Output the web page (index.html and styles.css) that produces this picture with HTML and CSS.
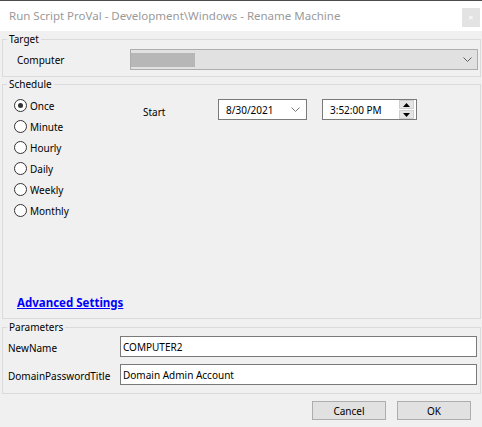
FILE: index.html
```html
<!DOCTYPE html>
<html>
<head>
<meta charset="utf-8">
<link rel="stylesheet" href="styles.css">
</head>
<body>
<div class="window">
  <div class="titlebar">
    <span class="title">Run Script ProVal - Development\Windows - Rename Machine</span>
    <span class="close">&#x2715;</span>
  </div>
  <div class="content">
    <fieldset class="group target">
      <legend>Target</legend>
      <div class="target-inner">
        <span class="lbl-computer">Computer</span>
        <div class="combo">
          <span class="blur"></span>
          <svg class="chev" width="9" height="5" viewBox="0 0 9 5"><path d="M0.5 0.5 L4.5 4.5 L8.5 0.5" fill="none" stroke="#606060" stroke-width="1"/></svg>
        </div>
      </div>
    </fieldset>
    <fieldset class="group schedule">
      <legend>Schedule</legend>
      <div class="sched-inner">
        <div class="sched-top">
          <div class="radios">
            <div class="radio"><span class="circle checked"></span>Once</div>
            <div class="radio"><span class="circle"></span>Minute</div>
            <div class="radio"><span class="circle"></span>Hourly</div>
            <div class="radio"><span class="circle"></span>Daily</div>
            <div class="radio"><span class="circle"></span>Weekly</div>
            <div class="radio"><span class="circle"></span>Monthly</div>
          </div>
          <div class="start">
            <span class="start-lbl">Start</span>
            <div class="date">
              <span>8/30/2021</span>
              <svg class="dchev" width="9" height="5" viewBox="0 0 9 5"><path d="M0.5 0.5 L4.5 4.5 L8.5 0.5" fill="none" stroke="#777" stroke-width="1"/></svg>
            </div>
            <div class="time">
              <span>3:52:00 PM</span>
              <div class="spin">
                <div class="spin-btn"><svg width="7" height="4" viewBox="0 0 7 4"><path d="M0 4 L3.5 0 L7 4 Z" fill="#000"/></svg></div>
                <div class="spin-btn"><svg width="7" height="4" viewBox="0 0 7 4"><path d="M0 0 L3.5 4 L7 0 Z" fill="#000"/></svg></div>
              </div>
            </div>
          </div>
        </div>
        <a class="adv" href="#">Advanced Settings</a>
      </div>
    </fieldset>
    <fieldset class="group params">
      <legend>Parameters</legend>
      <div class="params-inner">
        <div class="prow"><span class="plbl">NewName</span><div class="input">COMPUTER2</div></div>
        <div class="prow"><span class="plbl">DomainPasswordTitle</span><div class="input">Domain Admin Account</div></div>
      </div>
    </fieldset>
    <div class="buttons">
      <div class="btn">Cancel</div>
      <div class="btn">OK</div>
    </div>
  </div>
</div>
</body>
</html>
```
FILE: styles.css
```css
html, body {
  margin: 0;
  padding: 0;
  background: #f0f0f0;
}
body {
  font-family: "Noto Sans", "Liberation Sans", sans-serif;
  font-size: 10px;
  color: #000;
}
.window {
  width: 482px;
  height: 427px;
  background: #f0f0f0;
  overflow: hidden;
}
.titlebar {
  height: 30px;
  border-top: 1px solid #4b4b4b;
  background: #fff;
  display: flex;
  align-items: flex-start;
  justify-content: space-between;
  padding: 0 2px 0 9px;
}
.title {
  font-size: 11.5px;
  color: #9a9a9a;
  line-height: 30px;
}
.close {
  margin-top: 7px;
  width: 18px;
  height: 19px;
  background: #e3e3e3;
  color: #fff;
  font-size: 7px;
  display: flex;
  align-items: center;
  justify-content: center;
}
.content {
  padding: 0 1px 0 2px;
}
.group {
  margin: 0;
  padding: 0;
  border: 1px solid #dadada;
  min-width: 0;
}
.group legend {
  margin-left: 4px;
  padding: 0 2px;
  line-height: 14px;
  font-size: 10px;
}
.target {
  margin-top: 1px;
}
.target-inner {
  display: flex;
  align-items: center;
  padding: 3px 2px 6px 14px;
}
.lbl-computer {
  width: 113px;
  flex: none;
  padding-top: 1px;
}
.combo {
  flex: 1;
  height: 19px;
  border: 1px solid #adadad;
  background: #e1e1e1;
  display: flex;
  align-items: center;
  justify-content: space-between;
  padding: 0 5px 0 0;
}
.blur {
  width: 64px;
  height: 14px;
  background: #b7b7b7;
}
.sched-inner {
  height: 215px;
  display: flex;
  flex-direction: column;
  padding: 4px 0 8px 11px;
}
.sched-top {
  display: flex;
  align-items: flex-start;
}
.radios {
  width: 129px;
  display: flex;
  flex-direction: column;
}
.radio {
  height: 21px;
  display: flex;
  align-items: center;
}
.circle {
  width: 11px;
  height: 11px;
  border: 1px solid #333;
  border-radius: 50%;
  background: #fff;
  margin-right: 3px;
  display: flex;
  align-items: center;
  justify-content: center;
  flex: none;
}
.circle.checked::after {
  content: "";
  width: 5px;
  height: 5px;
  border-radius: 50%;
  background: #333;
}
.start {
  display: flex;
  align-items: center;
  margin-top: 4px;
}
.start-lbl {
  width: 75px;
  padding-top: 4px;
}
.date {
  width: 87px;
  height: 19px;
  border: 1px solid #7a7a7a;
  background: #fff;
  display: flex;
  align-items: center;
  justify-content: space-between;
}
.date span {
  padding-left: 7px;
}
.dchev {
  margin-right: 6px;
}
.time {
  margin-left: 15px;
  width: 93px;
  height: 19px;
  border: 1px solid #7a7a7a;
  background: #fff;
  display: flex;
  align-items: center;
  justify-content: space-between;
}
.time span {
  padding-left: 7px;
}
.spin {
  display: flex;
  flex-direction: column;
  margin-right: 2px;
  gap: 1px;
}
.spin-btn {
  width: 13px;
  height: 7px;
  background: #e5e5e5;
  border: 1px solid #cfcfcf;
  display: flex;
  align-items: center;
  justify-content: center;
}
.adv {
  margin-top: auto;
  line-height: 14px;
  font-size: 11.5px;
  font-weight: bold;
  color: #0000ff;
  text-decoration: underline;
  padding-left: 3px;
  align-self: flex-start;
}
.params {
  margin-top: 1px;
}
.params-inner {
  display: flex;
  flex-direction: column;
  gap: 7px;
  padding: 2px 3px 8px 5px;
}
.prow {
  display: flex;
  align-items: center;
}
.plbl {
  width: 112px;
  flex: none;
  padding-top: 3px;
}
.input {
  flex: 1;
  height: 19px;
  border: 1px solid #7a7a7a;
  background: #fff;
  display: flex;
  align-items: center;
  padding-left: 2px;
}
.buttons {
  display: flex;
  justify-content: flex-end;
  gap: 11px;
  margin-top: 7px;
  padding-right: 10px;
}
.btn {
  width: 72px;
  height: 17px;
  border: 1px solid #adadad;
  background: #e1e1e1;
  display: flex;
  align-items: center;
  justify-content: center;
}
```
